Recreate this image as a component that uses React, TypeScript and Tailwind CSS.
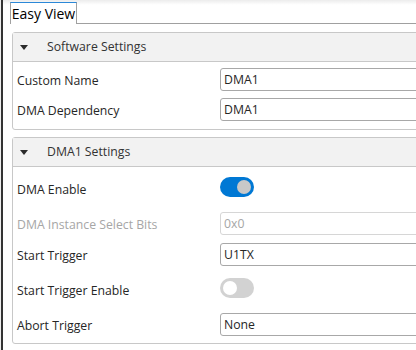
import React from "react";

type Row =
  | { kind: "input"; label: string; value: string; disabled?: boolean }
  | { kind: "toggle"; label: string; on: boolean };

const softwareRows: Row[] = [
  { kind: "input", label: "Custom Name", value: "DMA1" },
  { kind: "input", label: "DMA Dependency", value: "DMA1" },
];

const dmaRows: Row[] = [
  { kind: "toggle", label: "DMA Enable", on: true },
  { kind: "input", label: "DMA Instance Select Bits", value: "0x0", disabled: true },
  { kind: "input", label: "Start Trigger", value: "U1TX" },
  { kind: "toggle", label: "Start Trigger Enable", on: false },
  { kind: "input", label: "Abort Trigger", value: "None" },
];

function Toggle({ on }: { on: boolean }) {
  return (
    <div
      className={
        on
          ? "mt-[7px] h-[20px] w-[34px] rounded-full bg-[#0078d4] flex items-center justify-end px-[3px]"
          : "mt-[7px] h-[20px] w-[34px] rounded-full bg-[#d2d2d2] flex items-center justify-start px-[3px]"
      }
    >
      <div className={on ? "h-[14px] w-[14px] rounded-full bg-[#c8c8c8]" : "h-[14px] w-[14px] rounded-full bg-white"} />
    </div>
  );
}

function Field({ row, inputH }: { row: Row; inputH: string }) {
  const disabled = row.kind === "input" && row.disabled;
  return (
    <div className={`grid grid-cols-[207px_1fr] ${row.kind === "toggle" ? "h-[39px]" : inputH}`}>
      <div className={`pl-[4px] pt-[2px] flex items-center ${disabled ? "text-[#a6a6a6]" : "text-[#262626]"}`}>{row.label}</div>
      <div className="flex items-start">
        {row.kind === "toggle" ? (
          <Toggle on={row.on} />
        ) : (
          <div
            className={
              disabled
                ? "mt-[3px] h-[23px] w-full rounded-[3px] border border-[#d6d6d6] pl-[3px] pt-[2px] flex items-center text-[#a6a6a6]"
                : "mt-[3px] h-[23px] w-full rounded-[3px] border border-[#a8a8a8] pl-[3px] pt-[2px] flex items-center text-[#262626]"
            }
          >
            {row.value}
          </div>
        )}
      </div>
    </div>
  );
}

function Section({ title, rows, inputH, pb }: { title: string; rows: Row[]; inputH: string; pb: string }) {
  return (
    <div className="w-[420px] rounded-[3px] border border-[#c8c8c8] bg-white">
      <div className="h-[29px] bg-[#f2f2f2] border-b border-[#c8c8c8] flex items-center">
        <svg width="8" height="5" viewBox="0 0 8 5" className="ml-[7px] mr-[19px]">
          <path d="M0 0 H8 L4 5 Z" fill="#2b2b2b" />
        </svg>
        <span className="text-[#333]">{title}</span>
      </div>
      <div className={`pt-[3px] ${pb}`}>
        {rows.map((r) => (
          <Field key={r.label} row={r} inputH={inputH} />
        ))}
      </div>
    </div>
  );
}

export default function App() {
  return (
    <div className="w-[416px] h-[350px] bg-white flex overflow-hidden font-['Open_Sans',sans-serif] text-[12.25px] leading-none">
      <div className="w-px bg-[#ededed]" />
      <div className="w-[2px] bg-[#333]" />
      <div className="flex-1 min-w-0 flex flex-col">
        {/* tab strip */}
        <div className="h-[24px] flex items-end bg-gradient-to-b from-[#ececec] to-white to-[20%]">
          <div className="w-[7px] h-full" />
          <div className="h-[22px] w-[67px] bg-white border-t border-t-[#2b88d8] border-x border-x-[#a0a0a0] pt-[1px] flex items-center justify-center text-[14px] text-black">
            Easy View
          </div>
          <div className="flex-1 h-full border-b border-[#a0a0a0]" />
        </div>

        <div className="pl-[9px] pt-[8px] flex flex-col gap-[7px]">
          <Section title="Software Settings" rows={softwareRows} inputH="h-[30px]" pb="pb-[4px]" />
          <Section title="DMA1 Settings" rows={dmaRows} inputH="h-[31px]" pb="pb-[2px]" />
        </div>
      </div>
    </div>
  );
}
